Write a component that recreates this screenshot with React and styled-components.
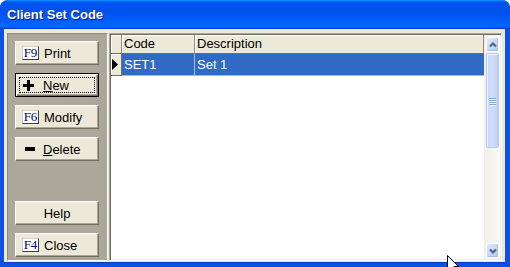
import React from "react";
import styled, { createGlobalStyle, css } from "styled-components";

const GlobalStyle = createGlobalStyle`
  html, body { margin: 0; padding: 0; background: #ffffff; }
  body { font-family: "Liberation Sans", Arial, sans-serif; }
  * { box-sizing: border-box; }
`;

const Window = styled.div`
  position: relative;
  width: 510px;
  height: 267px;
  display: flex;
  flex-direction: column;
  overflow: hidden;
  border-radius: 8px 8px 0 0;
  background: #0842d8;
`;

const TitleBar = styled.div`
  height: 29px;
  flex: none;
  display: flex;
  align-items: center;
  padding: 0 0 1px 7px;
  background: linear-gradient(
    180deg,
    #0997ff 0%,
    #0053ee 8%,
    #0050ee 40%,
    #0066ff 88%,
    #0066ff 93%,
    #005bff 95%,
    #003dd7 96%,
    #003dd7 100%
  );
  color: #ffffff;
  font: bold 13px "Liberation Sans", Arial, sans-serif;
  text-shadow: 1px 1px #0f1089;
`;

const Frame = styled.div`
  flex: 1;
  display: flex;
  gap: 1px;
  padding: 4px 3px 2px 3px;
  background: #ece9d8;
  border: solid #0b52e4;
  border-width: 0 5px 4px 4px;
  box-shadow: inset 0 -1px #0a3fc4;
`;

const SidePanel = styled.div`
  width: 101px;
  flex: none;
  display: flex;
  flex-direction: column;
  gap: 8px;
  padding: 7px 0 3px 7px;
  background: #aca899;
  border: 1px solid;
  border-color: #8e8b7f #ffffff #ffffff #8e8b7f;
`;

const Btn = styled.button`
  position: relative;
  width: 84px;
  height: 24px;
  flex: none;
  display: flex;
  align-items: center;
  justify-content: ${(p) => (p.$center ? "center" : "flex-start")};
  padding: 0 0 0 ${(p) => (p.$center ? "0" : "6px")};
  margin-top: ${(p) => (p.$pushDown ? "auto" : "0")};
  background: #ece9d8;
  border: 1px solid;
  border-color: #ffffff #716f64 #716f64 #ffffff;
  box-shadow: inset -1px -1px #aca899;
  font: 13px "Liberation Sans", Arial, sans-serif;
  color: #000000;
  cursor: default;
  ${(p) =>
    p.$default &&
    css`
      border-color: #000000;
      box-shadow: inset 1px 1px #ffffff, inset -1px -1px #716f64,
        inset -2px -2px #aca899;
      &::after {
        content: "";
        position: absolute;
        inset: 3px;
        border: 1px dotted #000000;
      }
    `}
`;

const KeyCap = styled.span`
  width: 17px;
  height: 14px;
  flex: none;
  display: inline-flex;
  align-items: center;
  justify-content: center;
  margin-right: 5px;
  background: #ffffff;
  border: 1px solid;
  border-color: #d4d0c8 #404040 #404040 #d4d0c8;
  font: 13px "Liberation Serif", "Times New Roman", serif;
  line-height: 12px;
  color: #00007f;
`;

const Glyph = styled.span`
  flex: none;
  display: inline-flex;
  margin-left: ${(p) => p.$ml}px;
  margin-right: ${(p) => p.$mr}px;
`;

const U = styled.span`
  text-decoration: underline;
  text-underline-offset: 1px;
`;

const GridFrame = styled.div`
  flex: 1;
  display: flex;
  padding: 1px;
  background: #ffffff;
  border: 1px solid;
  border-color: #aca899 #ffffff #ffffff #aca899;
  box-shadow: inset 1px 1px #716f64, inset -1px -1px #f1efe2;
`;

const Table = styled.div`
  flex: 1;
  display: flex;
  flex-direction: column;
  background: #ffffff;
`;

const Row = styled.div`
  display: grid;
  grid-template-columns: 11px 73px 1fr;
  height: ${(p) => (p.$header ? 19 : 22)}px;
  font: 13px "Liberation Sans", Arial, sans-serif;
`;

const HeadCell = styled.div`
  display: flex;
  align-items: center;
  padding: 0 0 1px 2px;
  background: #ece9d8;
  border-right: 1px solid #8e8b7f;
  border-bottom: 1px solid #716f64;
  box-shadow: inset 1px 1px #ffffff;
  color: #000000;
  white-space: nowrap;
`;

const IndicatorCell = styled.div`
  display: flex;
  align-items: center;
  padding-left: 1px;
  background: #ece9d8;
  border-right: 1px solid #716f64;
  border-bottom: 1px solid #716f64;
  box-shadow: inset 1px 1px #ffffff;
`;

const DataCell = styled.div`
  display: flex;
  align-items: center;
  padding: 0 0 1px 2px;
  background: ${(p) => (p.$selected ? "#316ac5" : "#ffffff")};
  color: ${(p) => (p.$selected ? "#ffffff" : "#000000")};
  border-right: ${(p) => (p.$last ? "none" : "1px solid #b4b8c8")};
  border-bottom: 1px solid #b4b4b4;
  white-space: nowrap;
`;

const ScrollBar = styled.div`
  width: 16px;
  flex: none;
  display: flex;
  flex-direction: column;
  gap: 1px;
  padding: 2px 1px 1px 2px;
  background: linear-gradient(90deg, #f0efe8 0%, #f5f4ef 60%, #fbfbf8 100%);
`;

const ScrollButton = styled.div`
  height: 15px;
  flex: none;
  display: flex;
  align-items: center;
  justify-content: center;
  margin-top: ${(p) => (p.$bottom ? "auto" : "0")};
  border: 1px solid #ffffff;
  border-radius: 2px;
  background: linear-gradient(135deg, #dfe8fe 0%, #c6d6fc 55%, #b4c8f6 100%);
  box-shadow: inset -1px -1px #a9bdeb;
`;

const Thumb = styled.div`
  height: 95px;
  flex: none;
  display: flex;
  align-items: center;
  justify-content: center;
  padding-top: 2px;
  border: 1px solid #b4c7f3;
  border-radius: 2px;
  background: linear-gradient(90deg, #c7d7fd 0%, #d2defd 45%, #bed0fa 100%);
  box-shadow: inset 1px 1px #eef3ff;
`;

const Grip = styled.div`
  width: 7px;
  height: 8px;
  background: repeating-linear-gradient(
    180deg,
    #8ea6e2 0 1px,
    #eef3ff 1px 2px
  );
`;

const Cursor = styled.svg`
  position: absolute;
  left: 447px;
  top: 255px;
`;

const Chevron = ({ down }) => (
  <svg width="8" height="6" viewBox="0 0 8 6">
    <polyline
      points={down ? "1,1.5 4,4.5 7,1.5" : "1,4.5 4,1.5 7,4.5"}
      fill="none"
      stroke="#4d6185"
      strokeWidth="2"
    />
  </svg>
);

export default function App() {
  return (
    <>
      <GlobalStyle />
      <Window>
        <TitleBar>Client Set Code</TitleBar>
        <Frame>
          <SidePanel>
            <Btn>
              <KeyCap>F9</KeyCap>Print
            </Btn>
            <Btn $default>
              <Glyph $ml={1} $mr={9}>
                <svg width="11" height="11" viewBox="0 0 11 11">
                  <rect x="4" y="0" width="3" height="11" fill="#000" />
                  <rect x="0" y="4" width="11" height="3" fill="#000" />
                </svg>
              </Glyph>
              <U>N</U>ew
            </Btn>
            <Btn>
              <KeyCap>F6</KeyCap>Modify
            </Btn>
            <Btn>
              <Glyph $ml={3} $mr={8}>
                <svg width="10" height="4" viewBox="0 0 10 4">
                  <rect x="0" y="0" width="10" height="4" fill="#000" />
                </svg>
              </Glyph>
              <U>D</U>elete
            </Btn>
            <Btn $center $pushDown>
              Help
            </Btn>
            <Btn>
              <KeyCap>F4</KeyCap>Close
            </Btn>
          </SidePanel>
          <GridFrame>
            <Table>
              <Row $header>
                <HeadCell />
                <HeadCell>Code</HeadCell>
                <HeadCell>Description</HeadCell>
              </Row>
              <Row>
                <IndicatorCell>
                  <svg width="6" height="11" viewBox="0 0 6 11">
                    <path d="M0 0 L6 5.5 L0 11 Z" fill="#000" />
                  </svg>
                </IndicatorCell>
                <DataCell $selected>SET1</DataCell>
                <DataCell $selected $last>
                  Set 1
                </DataCell>
              </Row>
            </Table>
            <ScrollBar>
              <ScrollButton>
                <Chevron />
              </ScrollButton>
              <Thumb>
                <Grip />
              </Thumb>
              <ScrollButton $bottom>
                <Chevron down />
              </ScrollButton>
            </ScrollBar>
          </GridFrame>
        </Frame>
        <Cursor width="12" height="19" viewBox="0 0 12 19">
          <path
            d="M0.5 0.5 L0.5 16.5 L4.5 12.5 L7 18.5 L9.5 17.5 L7 11.5 L11.5 11.5 Z"
            fill="#ffffff"
            stroke="#000000"
            strokeWidth="1"
          />
        </Cursor>
      </Window>
    </>
  );
}
